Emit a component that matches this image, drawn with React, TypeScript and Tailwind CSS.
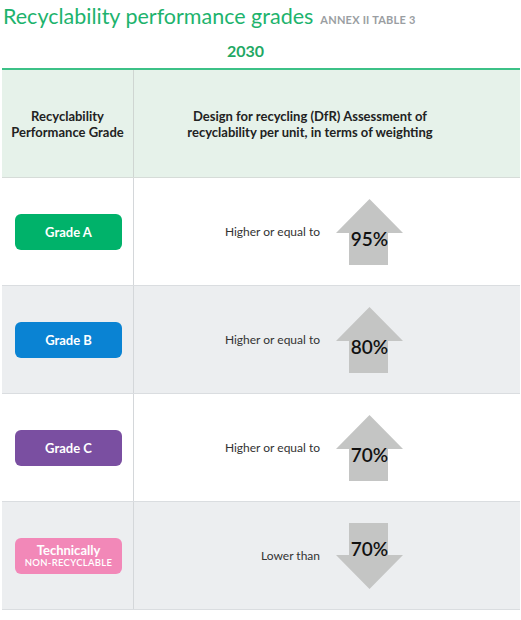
const rows = [
  { grade: 'Grade A', color: 'bg-[#00b26a]', bg: 'bg-white', label: 'Higher or equal to', value: '95%', up: true },
  { grade: 'Grade B', color: 'bg-[#0a83d3]', bg: 'bg-[#eceef0]', label: 'Higher or equal to', value: '80%', up: true },
  { grade: 'Grade C', color: 'bg-[#7a4fa1]', bg: 'bg-white', label: 'Higher or equal to', value: '70%', up: true },
  { grade: 'Technically', color: 'bg-[#f288b8]', bg: 'bg-[#eceef0]', label: 'Lower than', value: '70%', up: false },
]

// Grey block arrow with the percentage laid over it
const Arrow = ({ up, value }: { up: boolean; value: string }) => (
  <div className="relative h-[66px] w-[67px]">
    <svg width="67" height="66" viewBox="0 0 67 66" className="absolute inset-0">
      {up ? (
        <path d="M33.5 0 L67 34 L52 34 L52 66 L13 66 L13 34 L0 34 Z" fill="#c4c5c4" />
      ) : (
        <path d="M13 0 L52 0 L52 32 L67 32 L33.5 66 L0 32 L13 32 Z" fill="#c4c5c4" />
      )}
    </svg>
    <span
      className={`absolute left-0 right-0 text-center text-[19px] font-semibold leading-[24px] text-[#111] ${up ? 'top-[28px]' : 'top-[14px]'}`}
    >
      {value}
    </span>
  </div>
)

const App = () => (
  <div className="h-[620px] w-[521px] bg-white font-['Lato','Open_Sans',sans-serif]">
    <div className="flex items-baseline gap-[7px] pl-[3px] pt-[1px]">
      <h1 className="text-[21.5px] font-normal leading-[30px] text-[#1db36d]">Recyclability performance grades</h1>
      <span className="text-[11px] font-bold uppercase tracking-[0.02em] text-[#9a9ea2]">Annex II Table 3</span>
    </div>
    <p className="pl-[227px] pt-[9px] text-[16px] font-bold leading-[22px] text-[#1fa864]">2030</p>

    <div className="ml-[2px] mt-[6px] w-[518px] border-t-2 border-[#3cc187]">
      <div className="grid h-[108px] grid-cols-[132px_1fr] border-b border-[#d6dcd8] bg-[#e6f2ea]">
        <div className="flex items-center justify-center border-r border-[#cfd6d2] text-center text-[13px] font-bold leading-[16px] text-[#222]">
          Recyclability
          <br />
          Performance Grade
        </div>
        <div className="flex items-center justify-center pr-[34px] text-center text-[13px] font-bold leading-[16px] text-[#222]">
          Design for recycling (DfR) Assessment of
          <br />
          recyclability per unit, in terms of weighting
        </div>
      </div>

      {rows.map((r) => (
        <div key={r.grade + r.value} className={`grid h-[108px] grid-cols-[132px_1fr] border-b border-[#dadde0] ${r.bg}`}>
          <div className="flex items-center border-r border-[#d4d7da] pl-[13px]">
            <div
              className={`flex h-[36px] w-[107px] flex-col items-center justify-center rounded-[6px] text-white ${r.color}`}
            >
              <span className="text-[13px] font-bold leading-[14px]">{r.grade}</span>
              {!r.up && <span className="text-[9.5px] font-semibold leading-[12px] tracking-[0.03em]">NON-RECYCLABLE</span>}
            </div>
          </div>
          <div className="flex items-center">
            <span className="w-[186px] text-right text-[12px] text-[#333]">{r.label}</span>
            <div className="ml-[16px]">
              <Arrow up={r.up} value={r.value} />
            </div>
          </div>
        </div>
      ))}
    </div>
  </div>
)

export default App
